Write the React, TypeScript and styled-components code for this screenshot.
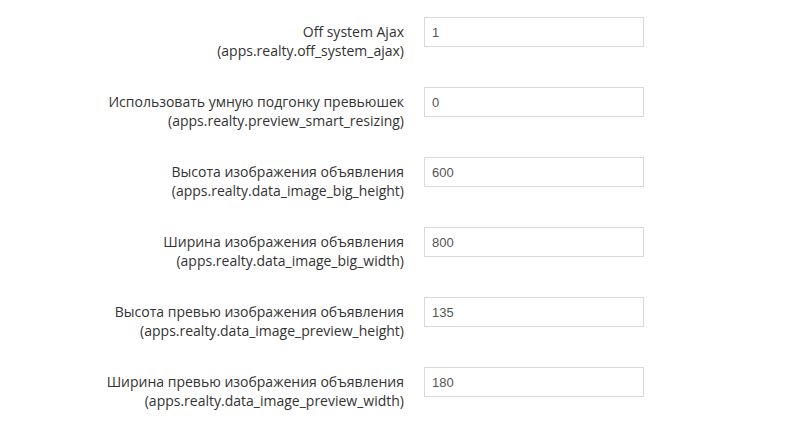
import { createGlobalStyle } from 'styled-components'
import styled from 'styled-components'

const GlobalStyle = createGlobalStyle`
  html, body {
    margin: 0;
    padding: 0;
    background: #fff;
  }
`

const Form = styled.div`
  display: flex;
  flex-direction: column;
  padding-top: 17px;
  font-family: 'Open Sans', sans-serif;
`

const Row = styled.div`
  display: flex;
  align-items: flex-start;
  height: 70px;
`

const Label = styled.label`
  width: 404px;
  padding-top: 5px;
  text-align: right;
  font-size: 14px;
  line-height: 19px;
  color: #333;
`

const Key = styled.span`
  display: block;
`

const Field = styled.input`
  box-sizing: border-box;
  width: 220px;
  height: 30px;
  margin-left: 20px;
  padding: 0 7px;
  border: 1px solid #d9d9d9;
  border-radius: 0;
  font-family: 'Liberation Sans', Arial, sans-serif;
  font-size: 13px;
  color: #555;
  outline: none;
`

const settings = [
  { title: 'Off system Ajax', key: 'apps.realty.off_system_ajax', value: '1' },
  { title: 'Использовать умную подгонку превьюшек', key: 'apps.realty.preview_smart_resizing', value: '0' },
  { title: 'Высота изображения объявления', key: 'apps.realty.data_image_big_height', value: '600' },
  { title: 'Ширина изображения объявления', key: 'apps.realty.data_image_big_width', value: '800' },
  { title: 'Высота превью изображения объявления', key: 'apps.realty.data_image_preview_height', value: '135' },
  { title: 'Ширина превью изображения объявления', key: 'apps.realty.data_image_preview_width', value: '180' },
]

export default function App() {
  return (
    <>
      <GlobalStyle />
      <Form>
        {settings.map((s) => (
          <Row key={s.key}>
            <Label>
              {s.title}
              <Key>({s.key})</Key>
            </Label>
            <Field defaultValue={s.value} />
          </Row>
        ))}
      </Form>
    </>
  )
}
